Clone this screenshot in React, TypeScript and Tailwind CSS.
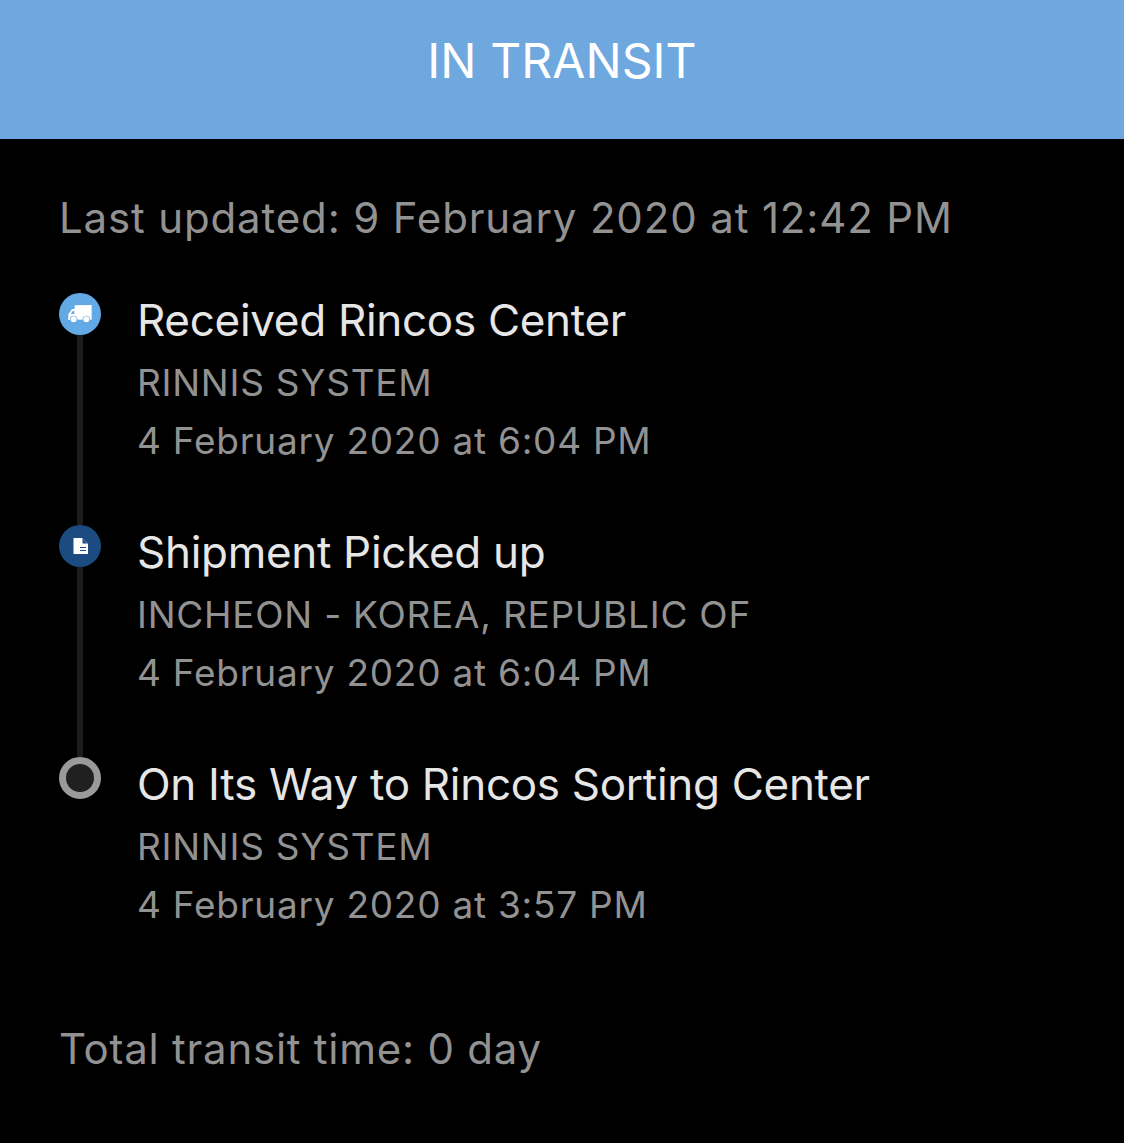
const F = "font-['Inter','Liberation_Sans',sans-serif]";

function Truck() {
  return (
    <svg width="24" height="18" viewBox="0 0 72 54" fill="white">
      <path d="M20 1L71 0V40H20z" />
      <path d="M22 12H12L1 28V44H22zM8 27L15 17H19V27z" fillRule="evenodd" />
      <rect x="1" y="38" width="70" height="6" />
      <circle cx="17" cy="43" r="11" fill="#62a9e6" />
      <circle cx="17" cy="43" r="9" />
      <circle cx="55" cy="43" r="11" fill="#62a9e6" />
      <circle cx="55" cy="43" r="9" />
    </svg>
  );
}

function Doc() {
  return (
    <svg width="15" height="16" viewBox="0 0 15 16">
      <path d="M0.5 0H9L15 6V16H0.5z" fill="white" />
      <path d="M9.5 0.5V5.5H14.5z" fill="#1c4b82" />
      <rect x="7" y="9" width="6" height="1" fill="#1c4b82" />
      <rect x="7" y="12" width="6" height="1" fill="#1c4b82" />
    </svg>
  );
}

function Row({ marker, title, place, date, last }: { marker: React.ReactNode; title: string; place: string; date: string; last?: boolean }) {
  return (
    <div className={`flex ${last ? "" : "h-[232px]"}`}>
      <div className="flex w-[42px] shrink-0 flex-col items-center">
        {marker}
        {!last && <div className="w-[6px] flex-1 bg-[#1c1c1c]" />}
      </div>
      <div className="ml-[36px] flex flex-col">
        <div className="text-[44px] leading-[54px] tracking-[-0.3px] text-[#e6e6e6]">{title}</div>
        <div className="mt-[7px] text-[37px] leading-[58px] tracking-[0.75px] text-[#929292]">{place}</div>
        <div className="text-[37px] leading-[58px] tracking-[0.75px] text-[#929292]">{date}</div>
      </div>
    </div>
  );
}

export default function App() {
  return (
    <div className={`min-h-[1143px] w-[1124px] overflow-hidden bg-black ${F}`}>
      <div className="flex h-[139px] items-center justify-center bg-[#6fa8df] pb-[18px] text-[48px] tracking-[0.1px] text-white">
        IN TRANSIT
      </div>
      <div className="px-[59px] pt-[51px]">
        <div className="text-[42px] leading-[56px] tracking-[0.85px] text-[#929292]">
          Last updated: 9 February 2020 at 12:42 PM
        </div>
        <div className="mt-[47px]">
          <Row
            marker={<div className="flex h-[42px] w-[42px] items-center justify-center rounded-full bg-[#62a9e6]"><Truck /></div>}
            title="Received Rincos Center"
            place="RINNIS SYSTEM"
            date="4 February 2020 at 6:04 PM"
          />
          <Row
            marker={<div className="flex h-[42px] w-[42px] items-center justify-center rounded-full bg-[#1c4b82]"><Doc /></div>}
            title="Shipment Picked up"
            place="INCHEON - KOREA, REPUBLIC OF"
            date="4 February 2020 at 6:04 PM"
          />
          <Row
            last
            marker={<div className="h-[42px] w-[42px] rounded-full border-[7px] border-[#9a9a9a] bg-[#202020]" />}
            title="On Its Way to Rincos Sorting Center"
            place="RINNIS SYSTEM"
            date="4 February 2020 at 3:57 PM"
          />
        </div>
        <div className="mt-[87px] text-[42px] leading-[56px] tracking-[0.75px] text-[#929292]">
          Total transit time: 0 day
        </div>
      </div>
    </div>
  );
}
